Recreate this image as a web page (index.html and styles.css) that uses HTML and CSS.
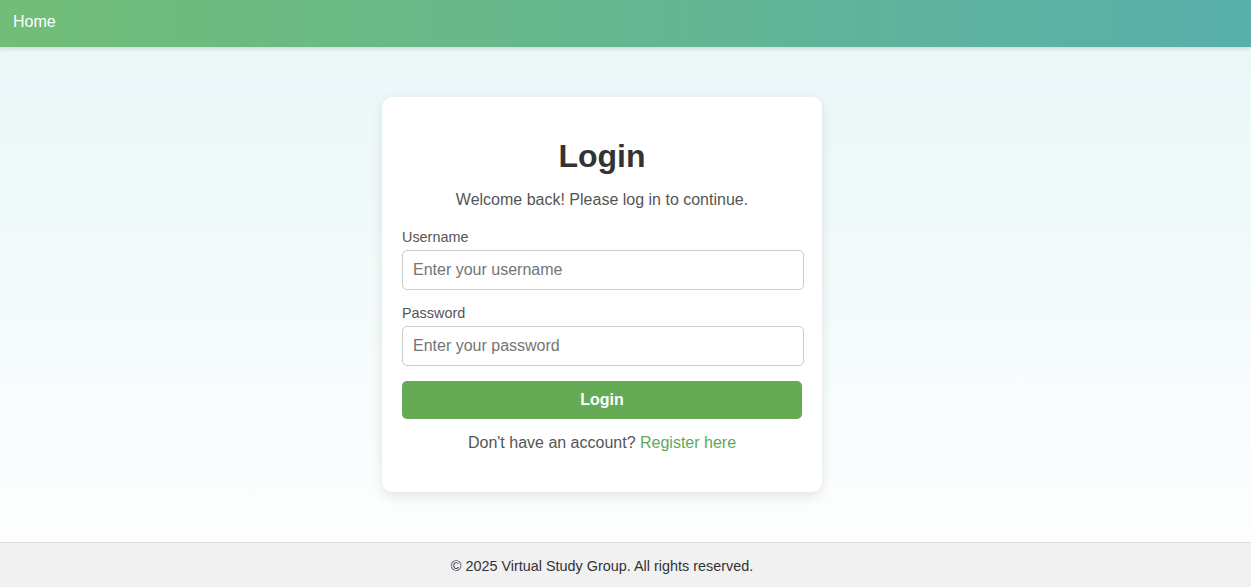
FILE: index.html
```html
<!DOCTYPE html>
<html lang="en">
<head>
<meta charset="utf-8">
<title>Login</title>
<link rel="stylesheet" href="styles.css">
</head>
<body>
<header class="topbar">
  <a class="home-link" href="#">Home</a>
</header>
<main class="main">
  <section class="card">
    <h2 class="title">Login</h2>
    <p class="subtitle">Welcome back! Please log in to continue.</p>
    <form class="form">
      <label class="label" for="username">Username</label>
      <input class="input" id="username" type="text" placeholder="Enter your username">
      <label class="label" for="password">Password</label>
      <input class="input" id="password" type="password" placeholder="Enter your password">
      <button class="btn" type="button">Login</button>
    </form>
    <p class="register">Don't have an account? <a href="#" class="register-link">Register here</a></p>
  </section>
</main>
<footer class="footer">© 2025 Virtual Study Group. All rights reserved.</footer>
</body>
</html>
```
FILE: styles.css
```css
* { box-sizing: content-box; }
html, body { height: 100%; }
body {
  margin: 0;
  font-family: "Liberation Sans", Arial, sans-serif;
  display: flex;
  flex-direction: column;
  min-height: 100vh;
  background: linear-gradient(to bottom, #e8f6f7, #ffffff);
  color: #333;
}
.topbar {
  height: 47px;
  display: flex;
  align-items: center;
  padding: 0 13px;
  background: linear-gradient(to right, #72bd77, #58afab);
  box-shadow: 0 2px 4px rgba(0,0,0,0.12);
  position: relative;
  z-index: 1;
}
.home-link {
  color: #fff;
  text-decoration: none;
  font-size: 16px;
  margin-top: -4px;
}
.main {
  flex: 1;
  display: flex;
  align-items: center;
  justify-content: center;
  padding-right: 47px;
}
.card {
  width: 400px;
  padding: 41px 20px 40px;
  background: #fff;
  border-radius: 10px;
  box-shadow: 0 4px 12px rgba(0,0,0,0.1);
  text-align: center;
}
.title {
  margin: 0 0 16px;
  font-size: 32px;
  line-height: 37px;
  color: #333;
}
.subtitle {
  margin: 0 0 20px;
  font-size: 16px;
  line-height: 18px;
  color: #555;
}
.form {
  display: flex;
  flex-direction: column;
  text-align: left;
}
.label {
  font-size: 14.4px;
  line-height: 16px;
  color: #555;
  margin-bottom: 5px;
}
.input {
  width: calc(100% - 20px);
  padding: 10px;
  border: 1px solid #ccc;
  border-radius: 5px;
  font-size: 16px;
  line-height: 18px;
  font-family: "Liberation Sans", Arial, sans-serif;
  color: #333;
  margin-bottom: 15px;
}
.input::placeholder { color: #757575; }
.btn {
  height: 38px;
  border: none;
  border-radius: 5px;
  background: #65ab55;
  color: #fff;
  font-weight: bold;
  font-size: 16px;
  font-family: "Liberation Sans", Arial, sans-serif;
  padding: 0;
}
.register {
  margin: 15px 0 0;
  font-size: 16px;
  line-height: 18px;
  color: #555;
}
.register-link {
  color: #5fa85a;
  text-decoration: none;
}
.footer {
  display: flex;
  align-items: center;
  justify-content: center;
  padding: 2px 47px 0 0;
  box-sizing: border-box;
  height: 45px;
  background: #f1f1f1;
  border-top: 1px solid #ddd;
  font-size: 14.4px;
  color: #333;
}
```
